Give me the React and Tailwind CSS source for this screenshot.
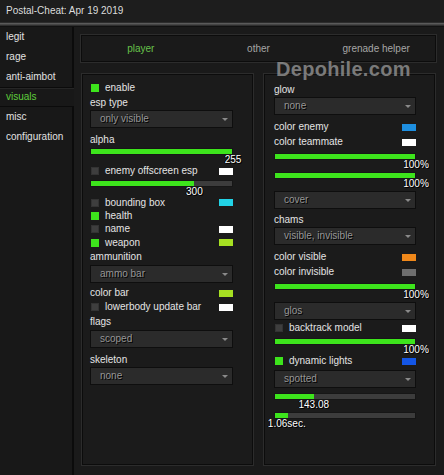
import React from "react";

const Check = ({ on }) => (
  <div
    className={
      "w-[8px] h-[8px] ml-[1px] mr-[6px] shrink-0 " +
      (on ? "bg-[#3de41c]" : "bg-[#3e3e3e] border border-[#333333]")
    }
  />
);

const Swatch = ({ color }) => (
  <div className="ml-auto w-[14px] h-[7px] shrink-0" style={{ background: color }} />
);

const Row = ({ check, label, swatch, h = "h-[14px]", mt = "" }) => (
  <div className={"flex items-center text-[#e4e4e4] " + h + " " + mt}>
    {check !== undefined && <Check on={check} />}
    <span className="whitespace-nowrap">{label}</span>
    {swatch && <Swatch color={swatch} />}
  </div>
);

const Label = ({ children, mt = "" }) => (
  <div className={"h-[14px] flex items-center text-[#e4e4e4] " + mt}>{children}</div>
);

const Dropdown = ({ value, mt = "" }) => (
  <div
    className={
      "h-[18px] bg-[#2b2b2b] border border-[#0e0e0e] flex items-center pl-[9px] pr-[4px] " + mt
    }
  >
    <span className="text-[#969696] [text-shadow:1px_1px_0_#000]">{value}</span>
    <div className="ml-auto w-0 h-0 border-l-[3px] border-r-[3px] border-t-[3px] border-l-transparent border-r-transparent border-t-[#8a8a8a]" />
  </div>
);

const Slider = ({ pct, value, mt = "" }) => (
  <div className={mt}>
    <div className="h-[7px] bg-[#3c3c3c] border border-[#161616] relative">
      <div className="h-full bg-[#3de41c]" style={{ width: pct + "%" }} />
    </div>
    <div className="h-[9px] relative">
      <span
        className="absolute top-0 leading-[10px] -translate-x-1/2 text-white whitespace-nowrap [text-shadow:1px_1px_0_#000,-1px_0_0_#000]"
        style={{ left: pct + "%" }}
      >
        {value}
      </span>
    </div>
  </div>
);

const SideItem = ({ label, active }) =>
  active ? (
    <div className="h-[20px] flex items-center pl-[6px] text-[#5fcf3c] border-y border-[#0b0b0b] shadow-[inset_0_1px_0_#262626]">
      {label}
    </div>
  ) : (
    <div className="h-[20px] flex items-center pl-[6px] text-[#e2e2e2] border-r-2 border-[#0b0b0b]">
      {label}
    </div>
  );

const boxCls =
  "w-[171px] h-full border border-[#0c0c0c] shadow-[0_0_0_1px_#2c2c2c] bg-[#1b1b1b] flex flex-col";

export default function App() {
  return (
    <div className="w-[444px] h-[475px] bg-[#1a1a1a] flex flex-col overflow-hidden relative font-['Liberation_Sans',Arial,sans-serif] text-[10px] leading-none">
      <div className="h-[22px] shrink-0 flex items-center px-[6px] bg-[#1d1d1d] text-[#dcdcdc]">
        Postal-Cheat: Apr 19 2019
      </div>
      <div className="h-[5px] shrink-0 flex flex-col">
        <div className="h-[1px] bg-[#2c2c2c]" />
        <div className="h-[1px] bg-[#5a5a5a]" />
        <div className="h-[1px] bg-[#454545]" />
        <div className="h-[1px] bg-[#2e2e2e]" />
        <div className="h-[1px] bg-[#111]" />
      </div>
      <div className="flex flex-1 min-h-0">
        <div className="w-[74px] shrink-0 flex flex-col bg-[#181818]">
          <SideItem label="legit" />
          <SideItem label="rage" />
          <SideItem label="anti-aimbot" />
          <SideItem label="visuals" active />
          <SideItem label="misc" />
          <SideItem label="configuration" />
          <div className="flex-1 border-r-2 border-[#0b0b0b]" />
        </div>
        <div className="flex-1 flex flex-col">
          <div className="mt-[8px] ml-[7px] mr-[8px] h-[27px] border border-[#0c0c0c] shadow-[0_0_0_1px_#2c2c2c] grid grid-cols-3 items-center text-center">
            <span className="text-[#67c24a]">player</span>
            <span className="text-[#a6a6a6]">other</span>
            <span className="text-[#a6a6a6]">grenade helper</span>
          </div>
          <div className="mt-[12px] ml-[8px] h-[391px] flex gap-[11px]">
            <div className={boxCls + " pl-[7px] pr-[19px] pt-[6px]"}>
              <Row check={true} label="enable" />
              <Label mt="mt-[1px]">esp type</Label>
              <Dropdown value="only visible" />
              <Label mt="mt-[5px]">alpha</Label>
              <Slider pct={100} value="255" mt="mt-[1px]" />
              <Row check={false} label="enemy offscreen esp" swatch="#ffffff" />
              <Slider pct={73} value="300" mt="mt-[2px]" />
              <Row check={false} label="bounding box" swatch="#22d3e6" h="h-[13px]" />
              <Row check={true} label="health" h="h-[13px]" />
              <Row check={false} label="name" swatch="#ffffff" />
              <Row check={true} label="weapon" swatch="#a6e022" h="h-[13px]" />
              <Label mt="mt-[1px]">ammunition</Label>
              <Dropdown value="ammo bar" mt="mt-[1px]" />
              <Row label="color bar" swatch="#a6e022" mt="mt-[3px]" />
              <Row check={false} label="lowerbody update bar" swatch="#ffffff" />
              <Label mt="mt-[1px]">flags</Label>
              <Dropdown value="scoped" mt="mt-[1px]" />
              <Label mt="mt-[5px]">skeleton</Label>
              <Dropdown value="none" />
            </div>
            <div className={boxCls + " pl-[9px] pr-[18px] pt-[8px]"}>
              <Label>glow</Label>
              <Dropdown value="none" />
              <Row label="color enemy" swatch="#1e8fe0" mt="mt-[5px]" />
              <Row label="color teammate" swatch="#ffffff" mt="mt-[1px]" />
              <Slider pct={100} value="100%" mt="mt-[4px]" />
              <Slider pct={100} value="100%" mt="mt-[3px]" />
              <Dropdown value="cover" mt="mt-[3px]" />
              <Label mt="mt-[4px]">chams</Label>
              <Dropdown value="visible, invisible" />
              <Row label="color visible" swatch="#f0881a" mt="mt-[5px]" />
              <Row label="color invisible" swatch="#6e6e6e" mt="mt-[1px]" />
              <Slider pct={100} value="100%" mt="mt-[4px]" />
              <Dropdown value="glos" mt="mt-[3px]" />
              <Row check={false} label="backtrack model" swatch="#ffffff" mt="mt-[1px]" />
              <Slider pct={100} value="100%" mt="mt-[3px]" />
              <Row check={true} label="dynamic lights" swatch="#1456e6" />
              <Dropdown value="spotted" mt="mt-[2px]" />
              <Slider pct={28} value="143.08" mt="mt-[5px]" />
              <Slider pct={9} value="1.06sec." mt="mt-[3px]" />
            </div>
          </div>
        </div>
      </div>
      <div className="absolute left-[276px] top-[57px] text-[20px] font-bold leading-[24px] text-[#9a9a9a]/75 tracking-[0.3px] pointer-events-none">
        Depohile.com
      </div>
    </div>
  );
}
